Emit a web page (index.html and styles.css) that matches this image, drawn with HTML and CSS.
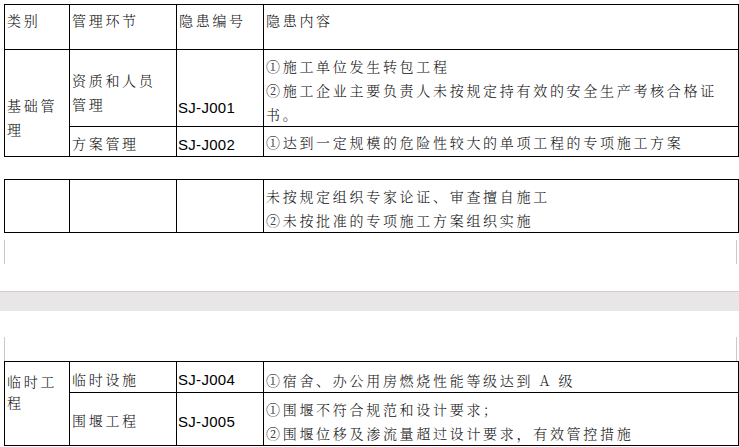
FILE: index.html
```html
<!DOCTYPE html>
<html lang="zh-CN">
<head>
<meta charset="utf-8">
<title>隐患排查表</title>
<link rel="stylesheet" href="styles.css">
</head>
<body>
<div class="doc">
  <section class="page page-first">
    <table class="grid">
      <colgroup><col class="c1"><col class="c2"><col class="c3"><col class="c4"></colgroup>
      <tr class="r-head">
        <td class="pt3">类别</td>
        <td class="pt3">管理环节</td>
        <td class="pt3">隐患编号</td>
        <td class="pt3">隐患内容</td>
      </tr>
      <tr class="r-a">
        <td rowspan="2" class="pt43">基础管理</td>
        <td class="pt18">资质和人员<br>管理</td>
        <td class="code pt48 lh20">SJ-J001</td>
        <td class="pt4">①施工单位发生转包工程<br>②施工企业主要负责人未按规定持有效的安全生产考核合格证书。</td>
      </tr>
      <tr class="r-b">
        <td class="pt6 lh20">方案管理</td>
        <td class="code pt8 lh20">SJ-J002</td>
        <td class="pt5 lh20">①达到一定规模的危险性较大的单项工程的专项施工方案</td>
      </tr>
    </table>

    <table class="grid grid-cont">
      <colgroup><col class="c1"><col class="c2"><col class="c3"><col class="c4"></colgroup>
      <tr class="r-c">
        <td></td>
        <td></td>
        <td></td>
        <td class="pt4">未按规定组织专家论证、审查擅自施工<br>②未按批准的专项施工方案组织实施</td>
      </tr>
    </table>

    <div class="crop crop-bottom"></div>
  </section>

  <div class="page-gap"></div>

  <section class="page page-second">
    <div class="crop crop-top"></div>
    <table class="grid">
      <colgroup><col class="c1"><col class="c2"><col class="c3"><col class="c4"></colgroup>
      <tr class="r-d">
        <td rowspan="2" class="pt9 lh21">临时工程</td>
        <td class="pt7 lh20">临时设施</td>
        <td class="code pt8 lh20">SJ-J004</td>
        <td class="pt8 lh20">①宿舍、办公用房燃烧性能等级达到 A 级</td>
      </tr>
      <tr class="r-e">
        <td class="pt17 lh20">围堰工程</td>
        <td class="code pt19 lh20">SJ-J005</td>
        <td class="pt4">①围堰不符合规范和设计要求；<br>②围堰位移及渗流量超过设计要求，有效管控措施</td>
      </tr>
    </table>
  </section>
</div>
</body>
</html>
```

FILE: styles.css
```css
html, body {
  margin: 0;
  padding: 0;
  background: #ffffff;
}

.doc {
  width: 739px;
  height: 447px;
  overflow: hidden;
  font-family: "Noto Serif CJK SC", "Noto Sans CJK SC", serif;
  font-size: 14px;
  font-weight: 300;
  letter-spacing: 2.7px;
  color: #111;
}

.page {
  padding: 0 1px 0 4px;
}

.page-first {
  padding-top: 4px;
}

.grid {
  border-collapse: collapse;
  table-layout: fixed;
  width: 734px;
}

.grid-cont {
  margin-top: 22px;
}

.c1 { width: 65px; }
.c2 { width: 107px; }
.c3 { width: 87px; }
.c4 { width: 475px; }

.grid td {
  border: 1px solid #000;
  vertical-align: top;
  padding: 0 0 0 2px;
  line-height: 24px;
  word-break: break-all;
}

.r-head { height: 45px; }
.r-a { height: 77px; }
.r-b { height: 30px; }
.r-c { height: 52px; }
.r-d { height: 31px; }
.r-e { height: 53px; }

.grid .code {
  font-family: "Liberation Sans", Arial, sans-serif;
  font-size: 15px;
  font-weight: 400;
  letter-spacing: 0.3px;
  color: #000;
  padding-left: 1px;
}

.grid .pt3 { padding-top: 3px; }
.grid .pt4 { padding-top: 4px; }
.grid .pt5 { padding-top: 5px; }
.grid .pt6 { padding-top: 6px; }
.grid .pt7 { padding-top: 7px; }
.grid .pt8 { padding-top: 8px; }
.grid .pt9 { padding-top: 9px; }
.grid .pt17 { padding-top: 17px; }
.grid .pt18 { padding-top: 18px; }
.grid .pt19 { padding-top: 19px; }
.grid .pt43 { padding-top: 43px; }
.grid .pt48 { padding-top: 48px; }

.grid .lh20 { line-height: 20px; }
.grid .lh21 { line-height: 21px; }

.crop {
  height: 24px;
  border-left: 1px solid #c9c9c9;
  border-right: 1px solid #c9c9c9;
  margin-right: 1px;
}

.crop-bottom {
  margin-top: 7px;
}

.page-gap {
  margin-top: 27px;
  height: 19px;
  background: #e8e6e6;
  border-top: 1px solid #cfcdcd;
  margin-bottom: 26px;
}
```
